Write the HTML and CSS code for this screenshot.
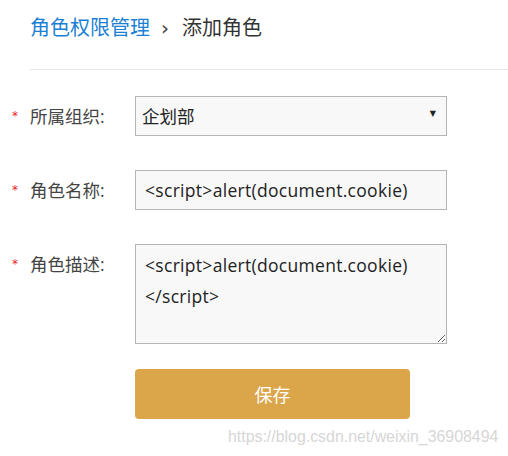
FILE: index.html
```html
<!DOCTYPE html>
<html lang="zh">
<head>
<meta charset="utf-8">
<link rel="stylesheet" href="styles.css">
</head>
<body>
<div class="page">
  <div class="crumbs">
    <a class="crumb-link">角色权限管理</a>
    <span class="crumb-sep">›</span>
    <span class="crumb-cur">添加角色</span>
  </div>
  <form class="form">
    <div class="row">
      <div class="label"><span class="star">*</span>所属组织:</div>
      <div class="select-wrap">
        <select class="field select"><option>企划部</option></select>
      </div>
    </div>
    <div class="row">
      <div class="label"><span class="star">*</span>角色名称:</div>
      <input class="field" type="text" value="<script>alert(document.cookie)">
    </div>
    <div class="row">
      <div class="label"><span class="star">*</span>角色描述:</div>
      <textarea class="field area"><script>alert(document.cookie)
</script></textarea>
    </div>
    <div class="row actions">
      <button type="button" class="save">保存</button>
    </div>
  </form>
  <div class="watermark">https://blog.csdn.net/weixin_36908494</div>
</div>
</body>
</html>
```
FILE: styles.css
```css
html, body {
  margin: 0;
  padding: 0;
  background: #fff;
}
body {
  font-family: "Open Sans", "Noto Sans CJK SC", sans-serif;
  color: #333;
}
.page {
  position: relative;
  width: 508px;
  height: 456px;
  overflow: hidden;
}
.crumbs {
  margin-left: 30px;
  padding-top: 8px;
  height: 40px;
  line-height: 40px;
  padding-bottom: 21px;
  border-bottom: 1px solid #e6e6e6;
  font-size: 20px;
  display: flex;
  align-items: center;
}
.crumb-link {
  color: #1b7fd4;
}
.crumb-sep {
  color: #444;
  margin: 0 13px 0 11px;
  font-family: "DejaVu Sans", sans-serif;
  font-size: 20px;
}
.crumb-cur {
  color: #333;
}
.form {
  margin: 26px 0 0 12px;
  display: flex;
  flex-direction: column;
  gap: 34px;
}
.row {
  display: flex;
  align-items: flex-start;
}
.label {
  width: 123px;
  flex: none;
  font-size: 17.5px;
  line-height: 40px;
  color: #444;
  display: flex;
}
.star {
  color: #e8202a;
  width: 18px;
  font-size: 12px;
  font-family: "DejaVu Sans", sans-serif;
  line-height: 40px;
}
.field {
  box-sizing: border-box;
  width: 312px;
  height: 40px;
  border: 1px solid #b5b5b5;
  background: #f8f8f8;
  font-family: "Open Sans", "Noto Sans CJK SC", sans-serif;
  font-size: 17.5px;
  letter-spacing: 0.3px;
  color: #222;
  padding: 0 9px;
  margin: 0;
  outline: none;
  border-radius: 0;
}
.select-wrap {
  position: relative;
}
.select {
  -webkit-appearance: none;
  appearance: none;
  padding-left: 6px;
  letter-spacing: 0;
}
.select-wrap::after {
  content: "▼";
  position: absolute;
  right: 11px;
  top: 13px;
  font-size: 8px;
  color: #222;
  font-family: "DejaVu Sans", sans-serif;
  pointer-events: none;
}
.area {
  height: 100px;
  padding: 5px 9px;
  line-height: 31px;
  resize: both;
  display: block;
}
.actions {
  margin-top: -9px;
  padding-left: 123px;
}
.save {
  width: 275px;
  height: 50px;
  border: none;
  border-radius: 4px;
  background: #dba54a;
  color: #fff;
  font-family: "Noto Sans CJK SC", sans-serif;
  font-size: 18px;
  cursor: pointer;
}
.watermark {
  position: absolute;
  left: 228px;
  top: 428px;
  font-family: "Liberation Sans", Arial, sans-serif;
  font-size: 15.9px;
  color: #d6d6d6;
  white-space: nowrap;
}
```
